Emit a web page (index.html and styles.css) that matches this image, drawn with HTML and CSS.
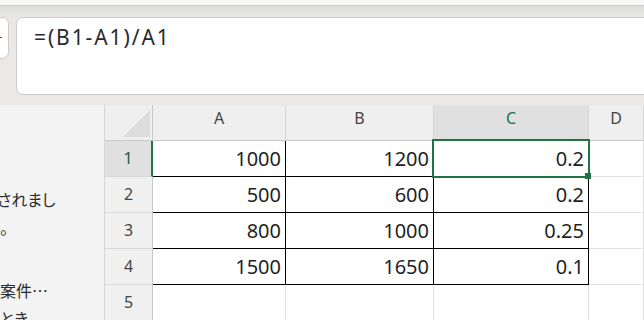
FILE: index.html
```html
<!DOCTYPE html>
<html lang="ja">

<head>
    <meta charset="UTF-8">
    <meta name="viewport" content="width=device-width, initial-scale=1.0">
    <title>Book1 - Excel</title>
    <link rel="stylesheet" href="styles.css">
</head>

<body>
    <div class="top-strip"></div>

    <!-- Formula bar -->
    <div class="toolbar">
        <div class="namebox"><span class="namebox-mark"></span></div>
        <div class="formula">=(B1-A1)/A1</div>
    </div>

    <div class="main">
        <!-- Side panel (chat), scrolled out of view -->
        <aside class="side">
            <div class="side-line first">されまし</div>
            <div class="side-line">。</div>
            <div class="side-line side-gap">案件…</div>
            <div class="side-line">とき</div>
        </aside>

        <!-- Sheet grid -->
        <div class="sheet">
            <div class="corner"><span class="corner-tri"></span></div>
            <div class="col-head">A</div>
            <div class="col-head">B</div>
            <div class="col-head active">C</div>
            <div class="col-head">D</div>

            <div class="row-head active">1</div>
            <div class="cell boxed">1000</div>
            <div class="cell boxed">1200</div>
            <div class="cell boxed selected">0.2<span class="sel-frame"><span class="fill-handle"></span></span></div>
            <div class="cell"></div>

            <div class="row-head">2</div>
            <div class="cell boxed">500</div>
            <div class="cell boxed">600</div>
            <div class="cell boxed">0.2</div>
            <div class="cell"></div>

            <div class="row-head">3</div>
            <div class="cell boxed">800</div>
            <div class="cell boxed">1000</div>
            <div class="cell boxed">0.25</div>
            <div class="cell"></div>

            <div class="row-head">4</div>
            <div class="cell boxed">1500</div>
            <div class="cell boxed">1650</div>
            <div class="cell boxed">0.1</div>
            <div class="cell"></div>

            <div class="row-head">5</div>
            <div class="cell"></div>
            <div class="cell"></div>
            <div class="cell"></div>
            <div class="cell"></div>
        </div>
    </div>
</body>

</html>
```

FILE: styles.css
```css
body {
    margin: 0;
    width: 644px;
    height: 320px;
    overflow: hidden;
    background: #ebe8e5;
    font-family: "Noto Sans", Arial, sans-serif;
    color: #242424;
}

.top-strip {
    height: 5px;
    background: #f7f7f7;
    border-bottom: 1px solid #cfcfcf;
}

.toolbar {
    height: 99px;
    box-sizing: border-box;
    padding-top: 11px;
    display: flex;
    align-items: flex-start;
    background: linear-gradient(#dedede, #e8e7e5 11px, #ebe8e5 20px);
}

.namebox {
    width: 20px;
    height: 42px;
    margin-left: -11px;
    box-sizing: border-box;
    background: #fff;
    border: 1px solid #cbcbcb;
    border-radius: 0 7px 7px 0;
    position: relative;
}

.namebox-mark {
    position: absolute;
    left: 10px;
    top: 19px;
    width: 2px;
    height: 1px;
    background: #555;
}

.formula {
    flex: 1;
    height: 78px;
    margin-left: 7px;
    margin-right: -10px;
    box-sizing: border-box;
    background: #fff;
    border: 1px solid #cbcbcb;
    border-radius: 7px 0 0 7px;
    padding: 5px 0 0 17px;
    font-size: 21px;
    line-height: 29px;
    letter-spacing: 1.9px;
    color: #2a2a2a;
}

.main {
    display: flex;
    height: 216px;
}

.side {
    width: 105px;
    flex-shrink: 0;
    box-sizing: border-box;
    background: #f3f3f3;
    border-right: 1px solid #d6d6d6;
    padding-top: 80px;
    overflow: hidden;
    font-family: "Noto Sans CJK JP", "Noto Sans", sans-serif;
    font-feature-settings: "palt";
    font-size: 16px;
    line-height: 28px;
    color: #2b2b2b;
}

.side-line {
    white-space: nowrap;
}

.side-line.first {
    margin-left: -3px;
}

.side-gap {
    margin-top: 35px;
}

.sheet {
    flex: 1;
    display: grid;
    grid-template-columns: 48px 133px 148px 155px 1fr;
    grid-auto-rows: 36px;
    background: #fff;
}

.sheet > div {
    box-sizing: border-box;
    border-right: 1px solid #e1e1e1;
    border-bottom: 1px solid #e1e1e1;
}

.sheet > .corner {
    background: #efefef;
    border-right-color: #c8c8c8;
    border-bottom-color: #c8c8c8;
    position: relative;
}

.corner-tri {
    position: absolute;
    right: 2px;
    bottom: 3px;
    width: 0;
    height: 0;
    border-left: 27px solid transparent;
    border-bottom: 27px solid #dcdcdc;
}

.sheet > .col-head {
    background: #efefef;
    border-right-color: #d6d6d6;
    border-bottom-color: #c8c8c8;
    text-align: center;
    font-size: 16px;
    line-height: 26px;
    color: #444;
}

.sheet > .col-head.active {
    background: #e0e0e0;
    color: #217346;
}

.sheet > .row-head {
    background: #f0f0f0;
    border-right-color: #c8c8c8;
    border-bottom-color: #d8d8d8;
    text-align: center;
    font-size: 16px;
    line-height: 35px;
    color: #444;
}

.sheet > .row-head.active {
    background: #e0e0e0;
    color: #1e5e3b;
    border-right: 2px solid #217346;
}

.cell {
    padding-right: 4px;
    text-align: right;
    font-size: 20px;
    line-height: 35px;
    color: #1f1f1f;
}

.sheet > .boxed {
    border-right-color: #000;
    border-bottom-color: #000;
}

.selected {
    position: relative;
}

.sel-frame {
    position: absolute;
    left: -2px;
    top: -2px;
    right: -2px;
    bottom: -2px;
    border: 2px solid #217346;
}

.fill-handle {
    position: absolute;
    right: -3px;
    bottom: -3px;
    width: 6px;
    height: 6px;
    background: #217346;
}
```
